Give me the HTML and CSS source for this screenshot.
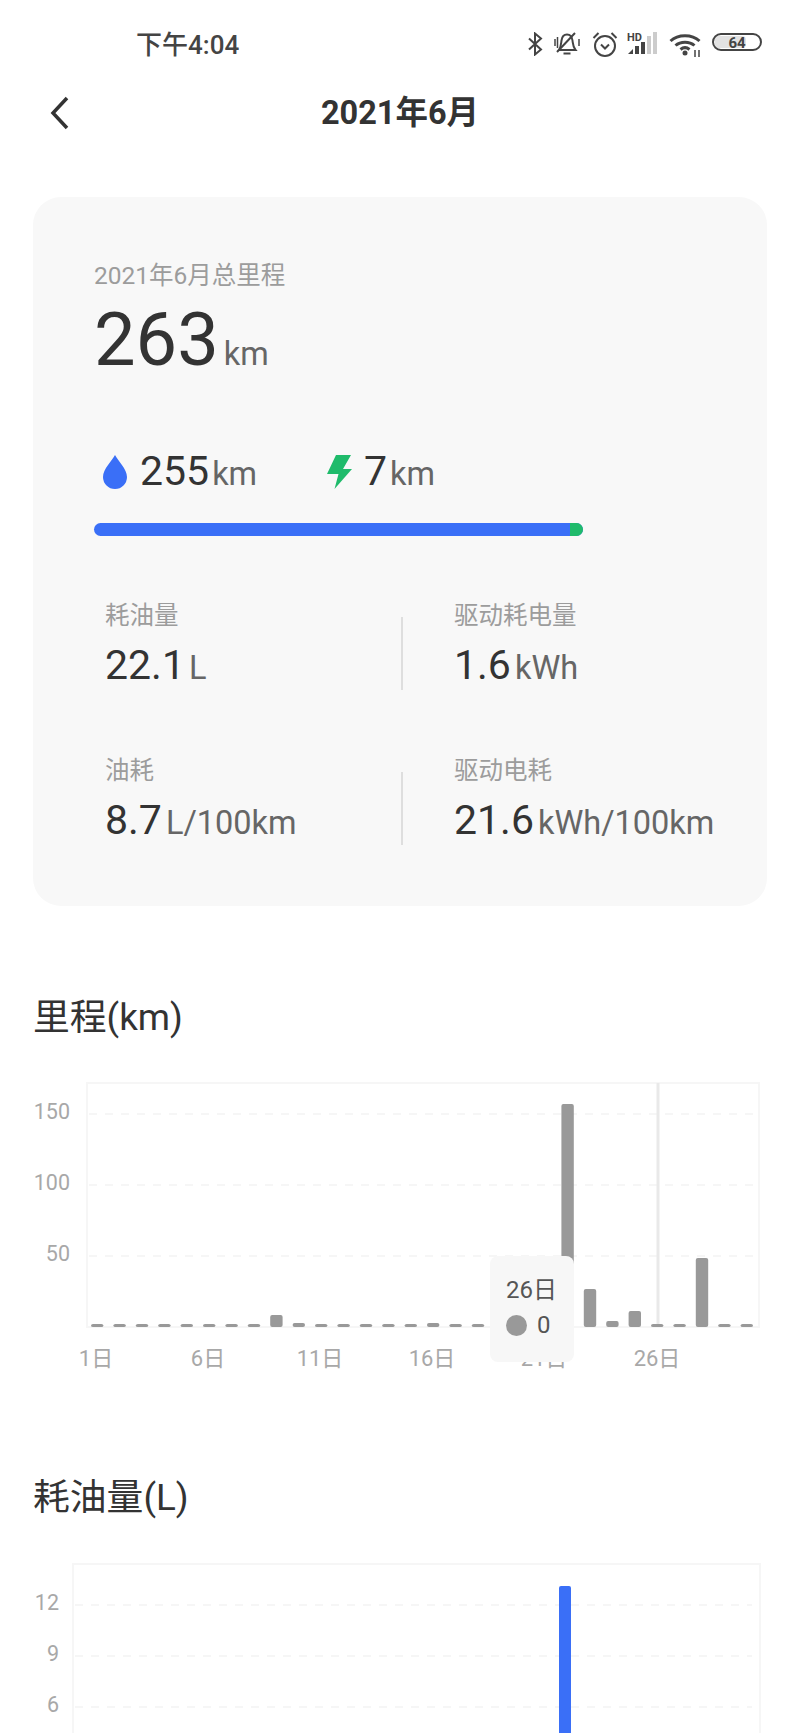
FILE: index.html
```html
<!DOCTYPE html>
<html lang="zh-CN">
<head>
    <meta charset="UTF-8">
    <title>2021年6月</title>
    <link rel="stylesheet" href="styles.css">
</head>
<body>
    <div class="statusbar">
        <span class="time">下午4:04</span>
        <div class="status-icons">
            <svg class="ic-bt" width="16" height="24" viewBox="0 0 16 24"><path d="M2 6.500l12 11-6 5V1.500l6 5-12 11"/></svg>
            <svg class="ic-bell" width="26" height="24" viewBox="0 0 26 24"><path d="M5 18c2-3 2-6 2.500-9.500C8 4.500 10.500 2.500 13 2.500s5 2 5.500 6c.5 3.500.5 6.500 3 9.500z"/><path d="M9.500 21.500h7M3 20L21 1"/><path class="thin" d="M1 7v7M25 7v7M3.500 5v11"/></svg>
            <svg class="ic-alarm" width="26" height="26" viewBox="0 0 26 26"><circle cx="13" cy="15" r="10"/><path d="M9 13.500l4 4 4-4M1.500 7l5-5M24.500 7l-5-5"/></svg>
            <svg class="ic-signal" width="31" height="24" viewBox="0 0 31 24"><text class="hd" x="0" y="9.500">HD</text><path class="wedge" d="M1 23l5-5v5z"/><rect x="8" y="15" width="4" height="8"/><rect x="14" y="11" width="4" height="12"/><rect class="off" x="20" y="5" width="4" height="18"/><rect class="off" x="26" y="1" width="4" height="22"/></svg>
            <svg class="ic-wifi" width="34" height="25" viewBox="0 0 34 25"><path d="M1.500 8C9 1 23 1 30.500 8M6.500 12.500c5-4.500 14-4.500 19 0M11.500 16.500c3-2.500 6-2.500 9 0"/><circle class="dot" cx="16" cy="20" r="2.500"/><path class="thin" d="M26 17v7M30 17v7"/></svg>
            <svg class="ic-batt" width="50" height="18" viewBox="0 0 50 18"><rect class="level" x="3" y="3" width="31" height="12" rx="4"/><rect class="shell" x="1" y="1" width="48" height="16" rx="8"/><text class="pct" x="25" y="14.500">64</text></svg>
        </div>
    </div>

    <header class="nav">
        <svg class="back" width="22" height="34" viewBox="0 0 22 34"><path d="M18 2L4 17l14 15"/></svg>
        <h1>2021年6月</h1>
    </header>

    <section class="card">
        <div class="card-label">2021年6月总里程</div>
        <div class="total"><span class="total-num">263</span><span class="unit">km</span></div>

        <div class="split">
            <div class="split-item split-fuel">
                <svg class="split-icon" width="26" height="34" viewBox="0 0 26 34"><path d="M13 0C10 6 1 14 1 22a12 12 0 0 0 24 0C25 14 16 6 13 0z"/></svg>
                <span class="num">255</span><span class="unit">km</span>
            </div>
            <div class="split-item">
                <svg class="split-icon" width="25" height="34" viewBox="0 0 25 34"><path d="M9 0h15l-8 14h9L7.500 34l4-15H0z"/></svg>
                <span class="num">7</span><span class="unit">km</span>
            </div>
        </div>

        <div class="bar">
            <div class="bar-green"></div>
            <div class="bar-blue"></div>
        </div>

        <div class="stat-row">
            <div class="stat">
                <div class="card-label">耗油量</div>
                <div class="value"><span class="num">22.1</span><span class="unit">L</span></div>
            </div>
            <div class="divider"></div>
            <div class="stat-right">
                <div class="card-label">驱动耗电量</div>
                <div class="value"><span class="num">1.6</span><span class="unit">kWh</span></div>
            </div>
        </div>
        <div class="stat-row second">
            <div class="stat">
                <div class="card-label">油耗</div>
                <div class="value"><span class="num">8.7</span><span class="unit">L/100km</span></div>
            </div>
            <div class="divider"></div>
            <div class="stat-right">
                <div class="card-label">驱动电耗</div>
                <div class="value"><span class="num">21.6</span><span class="unit">kWh/100km</span></div>
            </div>
        </div>
    </section>

    <h2 class="section-title first">里程(km)</h2>
    <div class="chart">
        <svg width="800" height="300" viewBox="0 0 800 300">
            <rect class="frame" x="87" y="11" width="672" height="244"/>
            <path class="grid" d="M89 42H757M89 113H757M89 184H757"/>
            <text class="y-label" x="70" y="47">150</text>
            <text class="y-label" x="70" y="118">100</text>
            <text class="y-label" x="70" y="189">50</text>
            <rect class="cross" x="656.500" y="11" width="3" height="244"/>
            <g class="bars">
                <rect x="91" y="252" width="12.400" height="3"/>
                <rect x="113.400" y="252" width="12.400" height="3"/>
                <rect x="135.800" y="252" width="12.400" height="3"/>
                <rect x="158.200" y="252" width="12.400" height="3"/>
                <rect x="180.600" y="252" width="12.400" height="3"/>
                <rect x="203" y="252" width="12.400" height="3"/>
                <rect x="225.400" y="252" width="12.400" height="3"/>
                <rect x="247.800" y="252" width="12.400" height="3"/>
                <rect x="270.200" y="243" width="12.400" height="12"/>
                <rect x="292.600" y="251" width="12.400" height="4"/>
                <rect x="315" y="252" width="12.400" height="3"/>
                <rect x="337.400" y="252" width="12.400" height="3"/>
                <rect x="359.800" y="252" width="12.400" height="3"/>
                <rect x="382.200" y="252" width="12.400" height="3"/>
                <rect x="404.600" y="252" width="12.400" height="3"/>
                <rect x="427" y="251" width="12.400" height="4"/>
                <rect x="449.400" y="252" width="12.400" height="3"/>
                <rect x="471.800" y="252" width="12.400" height="3"/>
                <rect x="494.200" y="252" width="12.400" height="3"/>
                <rect x="516.600" y="252" width="12.400" height="3"/>
                <rect x="539" y="252" width="12.400" height="3"/>
                <rect x="561.400" y="32" width="12.400" height="223"/>
                <rect x="583.800" y="217" width="12.400" height="38"/>
                <rect x="606.200" y="249" width="12.400" height="6"/>
                <rect x="628.600" y="239" width="12.400" height="16"/>
                <rect x="651" y="252" width="12.400" height="3"/>
                <rect x="673.400" y="252" width="12.400" height="3"/>
                <rect x="695.800" y="186" width="12.400" height="69"/>
                <rect x="718.200" y="252" width="12.400" height="3"/>
                <rect x="740.600" y="252" width="12.400" height="3"/>
            </g>
            <text class="x-label" x="96" y="294">1日</text>
            <text class="x-label" x="208" y="294">6日</text>
            <text class="x-label" x="320" y="294">11日</text>
            <text class="x-label" x="432" y="294">16日</text>
            <text class="x-label" x="544" y="294">21日</text>
            <text class="x-label" x="657" y="294">26日</text>
        </svg>
        <div class="tooltip">
            <div class="tooltip-day">26日</div>
            <div class="tooltip-row"><span class="tooltip-dot"></span><span>0</span></div>
        </div>
    </div>

    <h2 class="section-title">耗油量(L)</h2>
    <div class="chart">
        <svg width="800" height="180" viewBox="0 0 800 180">
            <rect class="frame" x="73" y="11" width="687" height="300"/>
            <path class="grid" d="M75 52H752M75 103H752M75 154H752"/>
            <text class="y-label" x="59" y="57">12</text>
            <text class="y-label" x="59" y="108">9</text>
            <text class="y-label" x="59" y="159">6</text>
            <rect class="bar-fuel" x="559" y="33" width="12" height="200" rx="2"/>
        </svg>
    </div>
</body>
</html>
```
FILE: styles.css
```css
*{
    margin: 0;
    padding: 0;
    box-sizing: border-box;
}

html, body{
    height: 1733px;
    overflow: hidden;
}

body{
    background-color: #fff;
    font-family: Roboto, "Noto Sans CJK SC", sans-serif;
    color: #333;
}

svg{
    display: block;
}

/* status bar */
.statusbar{
    height: 88px;
    padding: 32px 38px 0 136px;
    display: flex;
    justify-content: space-between;
    align-items: flex-start;
}
.time{
    font-size: 26px;
    line-height: 26px;
    font-weight: 500;
    color: #444;
}
.status-icons{
    display: flex;
    align-items: flex-start;
    margin-top: -1px;
}
.status-icons svg{
    fill: none;
    stroke: #444;
    stroke-width: 2;
}
.ic-bt{ margin: 1px 11px 0 0; }
.ic-bell{ margin: 1px 12px 0 0; }
.ic-alarm{ margin: 0 9px 0 0; }
.ic-signal{ margin: 0 11px 0 0; }
.ic-wifi{ margin: 2px 9px 0 0; }
.ic-batt{ margin: 2px 0 0 0; }

.status-icons .ic-signal rect, .status-icons .wedge{
    fill: #444;
    stroke: none;
}
.status-icons .ic-signal rect.off{
    fill: #ccc;
}
.status-icons .hd{
    font-size: 11px;
    font-weight: 700;
    fill: #444;
    stroke: none;
}
.status-icons .dot{
    fill: #444;
    stroke: none;
}
.status-icons .ic-wifi path{
    stroke-width: 3;
}
.status-icons .thin, .status-icons .ic-wifi .thin{
    stroke-width: 1.500;
}
.status-icons .level{
    fill: #e2e2e2;
    stroke: none;
}
.status-icons .pct{
    font-size: 15px;
    font-weight: 700;
    fill: #444;
    stroke: none;
    text-anchor: middle;
}

/* title bar */
.nav{
    height: 109px;
    padding-top: 1px;
    position: relative;
    display: flex;
    justify-content: center;
}
.nav h1{
    font-size: 32.500px;
    line-height: 48px;
    font-weight: 700;
}
.back{
    position: absolute;
    left: 49px;
    top: 8px;
    fill: none;
    stroke: #333;
    stroke-width: 3.500;
}

/* summary card */
.card{
    margin: 0 33px;
    height: 709px;
    padding: 63px 61px 0;
    background-color: #f8f8f8;
    border-radius: 28px;
}
.card-label{
    font-size: 24.500px;
    line-height: 32px;
    color: #9c9c9c;
}
.unit{
    font-size: 32.500px;
    color: #666;
    margin-left: 4px;
}
.num{
    font-size: 41px;
    color: #333;
}

.total{
    margin-top: 8px;
    height: 80px;
    line-height: 80px;
    display: flex;
    align-items: baseline;
}
.total-num{
    font-size: 74px;
    color: #333;
}
.total .unit{
    margin-left: 5px;
}

.split{
    margin-top: 67px;
    height: 48px;
    line-height: 48px;
    display: flex;
}
.split-item{
    display: flex;
    align-items: baseline;
}
.split-item .unit{
    margin-left: 3px;
}
.split-fuel{
    width: 233px;
    padding-left: 8px;
}
.split-icon{
    align-self: center;
    margin-right: 12px;
    margin-top: 1px;
}
.split-item path{
    fill: #1fbb6b;
}
.split-fuel .split-icon path{
    fill: #3a6ff7;
}

.bar{
    margin-top: 28px;
    width: 489px;
    height: 13px;
    background-color: #3a6ff7;
    border-radius: 7px;
    overflow: hidden;
    display: flex;
    flex-direction: row-reverse;
}
.bar-green{
    width: 13px;
    background-color: #1fbb6b;
}
.bar-blue{
    flex: 1;
}

.stat-row{
    margin-top: 64px;
    display: flex;
}
.stat-row.second{
    margin-top: 65px;
}
.stat{
    flex: none;
    width: 307px;
    padding-left: 11px;
}
.stat-right{
    flex: none;
    padding-left: 51px;
}
.divider{
    flex: none;
    width: 2px;
    height: 73px;
    align-self: flex-end;
    background-color: #dedede;
}
.value{
    margin-top: 9px;
    height: 49px;
    line-height: 48px;
    display: flex;
    align-items: baseline;
}

/* charts */
.section-title{
    margin: 102px 0 31px 33px;
    font-size: 36.800px;
    line-height: 48px;
    font-weight: 400;
    color: #333;
}
.section-title.first{
    margin: 88px 0 30px 33px;
}
.chart{
    position: relative;
}
.frame{
    fill: none;
    stroke: #f6f6f6;
    stroke-width: 2;
}
.grid{
    fill: none;
    stroke: #f6f6f6;
    stroke-width: 2;
    stroke-dasharray: 8 8;
}
.y-label, .x-label{
    font-size: 21.500px;
    fill: #a8a8a8;
}
.y-label{
    text-anchor: end;
}
.x-label{
    font-size: 22px;
    text-anchor: middle;
}
.cross{
    fill: #e9e9e9;
}
.bars rect{
    fill: #999;
    rx: 2px;
}
.bar-fuel{
    fill: #3a6ff7;
}

.tooltip{
    position: absolute;
    left: 490px;
    top: 184px;
    width: 84px;
    height: 106px;
    padding: 18px 0 0 16px;
    background-color: #f7f7f7;
    border-radius: 8px;
    font-size: 24px;
    line-height: 32px;
    color: #555;
}
.tooltip-row{
    margin-top: 3px;
    display: flex;
    align-items: center;
}
.tooltip-dot{
    width: 21px;
    height: 21px;
    margin-right: 10px;
    border-radius: 50%;
    background-color: #999;
}
```
